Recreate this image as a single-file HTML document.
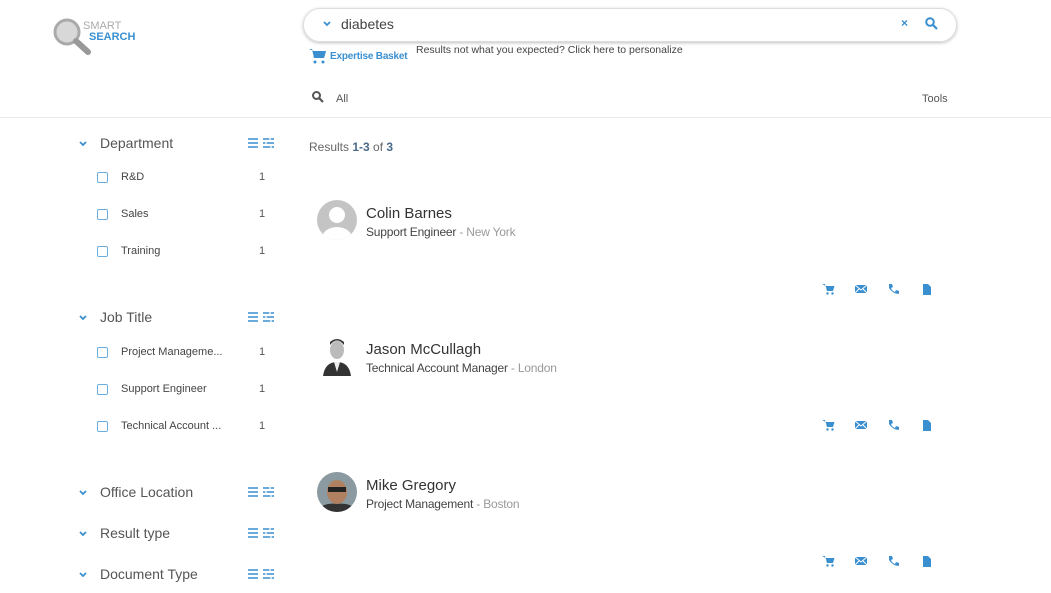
<!DOCTYPE html><html><head><style>
body{margin:0;width:1051px;height:593px;overflow:hidden;background:#fff;font-family:"Liberation Sans",sans-serif;color:#444;position:relative}
.a{position:absolute;white-space:nowrap}
.blue{color:#3a8fd0}
.cb{position:absolute;width:9px;height:9px;border:1.3px solid #6aaee0;border-radius:2px}
</style></head><body>
<svg class="a" style="left:52px;top:18px" width="40" height="40"><circle cx="15" cy="14" r="12" fill="#d8d8d8" stroke="#aaa" stroke-width="3"/><line x1="24" y1="23" x2="36" y2="34" stroke="#999" stroke-width="6" stroke-linecap="round"/></svg>
<div class="a" style="left:83px;top:21px;font-size:11px;color:#aaa;line-height:11px">SMART</div>
<div class="a blue" style="left:89px;top:32px;font-size:11px;font-weight:bold;line-height:11px">SEARCH</div>
<div class="a" style="left:303px;top:8px;width:652px;height:32px;border:1px solid #ddd;border-radius:17px;box-shadow:0 1px 3px rgba(0,0,0,.25)"></div>
<svg class="a" style="left:323px;top:21px" width="8" height="6"><path d="M1 1l3 3l3-3" fill="none" stroke="#3a8fd0" stroke-width="1.8"/></svg>
<div class="a" style="left:341px;top:16px;font-size:14px;color:#444">diabetes</div>
<div class="a blue" style="left:901px;top:16px;font-size:12px;font-weight:bold">×</div>
<svg class="a" style="left:925px;top:17px" width="13" height="13"><circle cx="5" cy="5" r="3.8" fill="none" stroke="#3a8fd0" stroke-width="2"/><line x1="8" y1="8" x2="12" y2="12" stroke="#3a8fd0" stroke-width="2.2"/></svg>
<svg class="a" style="left:309px;top:48px" width="17" height="16"><path d="M0 1h3l2 9h10l2-7H5" fill="#3a8fd0"/><path d="M4 3h13l-2 7H5z" fill="#3a8fd0"/><circle cx="6" cy="14" r="1.5" fill="#3a8fd0"/><circle cx="14" cy="14" r="1.5" fill="#3a8fd0"/></svg>
<div class="a blue" style="left:330px;top:51px;font-size:10px;font-weight:bold;letter-spacing:-0.2px">Expertise Basket</div>
<div class="a" style="left:416px;top:44px;font-size:10.5px;color:#444">Results not what you expected? Click here to personalize</div>
<svg class="a" style="left:312px;top:91px" width="12" height="12"><circle cx="4.5" cy="4.5" r="3.5" fill="none" stroke="#555" stroke-width="2"/><line x1="7" y1="7" x2="11" y2="11" stroke="#555" stroke-width="2.2"/></svg>
<div class="a" style="left:336px;top:93px;font-size:11px;color:#555">All</div>
<div class="a" style="left:922px;top:93px;font-size:11px;color:#555">Tools</div>
<div class="a" style="left:0;top:117px;width:1051px;height:1px;background:#e8e8e8"></div>

<div id="f"></div>
<div class="a" style="left:309px;top:140px;font-size:12px;color:#666">Results <b style="color:#4a6a8a">1-3</b> of <b style="color:#4a6a8a">3</b></div>
<script>
var h='';
function facet(y,t){h+='<svg class="a" style="left:79px;top:'+(y-2)+'px" width="8" height="6"><path d="M1 1l3 3l3-3" fill="none" stroke="#3a8fd0" stroke-width="1.8"/></svg><div class="a" style="left:100px;top:'+(y-8)+'px;font-size:14px;color:#555">'+t+'</div>'+
'<svg class="a" style="left:248px;top:'+(y-5)+'px" width="27" height="10"><path d="M0 1h10M0 5h10M0 9h10M15 1h11M15 5h11M15 9h11" stroke="#3a8fd0" stroke-width="1.6"/><path d="M22 0v3M18 3v4M23 7v3" stroke="#fff" stroke-width="1.3"/></svg>';}
function item(y,t){h+='<div class="cb" style="left:97px;top:'+(y-5)+'px"></div><div class="a" style="left:121px;top:'+(y-6)+'px;font-size:11px;color:#444">'+t+'</div><div class="a" style="left:259px;top:'+(y-6)+'px;font-size:11px;color:#555">1</div>';}
facet(143,'Department');item(177,'R&amp;D');item(214,'Sales');item(251,'Training');
facet(317,'Job Title');item(352,'Project Manageme...');item(389,'Support Engineer');item(426,'Technical Account ...');
facet(492,'Office Location');facet(533,'Result type');facet(574,'Document Type');
var C=[['Colin Barnes','Support Engineer','New York'],['Jason McCullagh','Technical Account Manager','London'],['Mike Gregory','Project Management','Boston']];
C.forEach(function(c,i){var y=213+i*136;
var av=i==0?'<svg class="a" style="left:317px;top:'+(y-13)+'px" width="40" height="40"><clipPath id="c0"><circle cx="20" cy="20" r="20"/></clipPath><g clip-path="url(#c0)"><rect width="40" height="40" fill="#c4c4c4"/><circle cx="20" cy="15" r="8" fill="#fff"/><ellipse cx="20" cy="38" rx="15" ry="11" fill="#fff"/></g></svg>':
i==1?'<svg class="a" style="left:317px;top:'+(y-13)+'px" width="40" height="40"><ellipse cx="20" cy="14" rx="7" ry="9" fill="#bbb"/><path d="M13 9q7-9 14 0v-3q-7-6-14 0z" fill="#333"/><path d="M6 40q2-14 14-14q12 0 14 14z" fill="#333"/><path d="M17 26l3 10l3-10z" fill="#eee"/></svg>':
'<svg class="a" style="left:317px;top:'+(y-13)+'px" width="40" height="40"><clipPath id="c2"><circle cx="20" cy="20" r="20"/></clipPath><g clip-path="url(#c2)"><rect width="40" height="40" fill="#8a9aa0"/><ellipse cx="20" cy="20" rx="10" ry="12" fill="#b08060"/><rect x="11" y="15" width="18" height="5" fill="#222"/><path d="M0 40q5-10 20-8q15-2 20 8z" fill="#333"/></g></svg>';
h+=av+'<div class="a" style="left:366px;top:'+(y-8)+'px;font-size:15px;color:#333">'+c[0]+'</div><div class="a" style="left:366px;top:'+(y+12)+'px;font-size:12px;color:#444;letter-spacing:-0.2px">'+c[1]+' <span style="color:#999">- '+c[2]+'</span></div>';
var iy=y+70;
h+='<svg class="a" style="left:822px;top:'+iy+'px" width="112" height="12" fill="#3a8fd0"><path d="M0 1h3l2 7h6l1.5-5H4z"/><circle cx="5.5" cy="10.5" r="1.2"/><circle cx="10.5" cy="10.5" r="1.2"/>'+
'<rect x="33" y="2" width="12" height="8"/><path d="M33 2l6 5l6-5M33 10l4-4M45 10l-4-4" stroke="#fff" stroke-width="1" fill="none"/>'+
'<path d="M67 1l3 0l1 3l-2 1q1 3 4 4l1-2l3 1v3q-6 0-10-6z"/>'+
'<path d="M101 1h5l3 3v8h-8z"/></svg>';
});
document.getElementById('f').innerHTML=h;
</script>
</body></html>
